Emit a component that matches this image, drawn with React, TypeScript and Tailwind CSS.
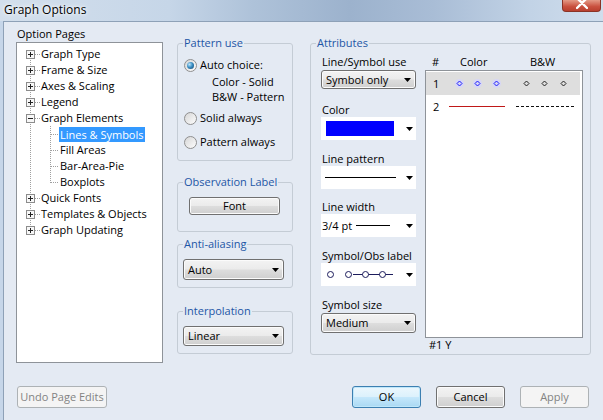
import React from "react";

const Arrow = () => (
  <svg width="7" height="4" viewBox="0 0 7 4" className="shrink-0">
    <path d="M0 0H7L3.5 4Z" fill="#000" />
  </svg>
);

function Radio({ checked }: { checked?: boolean }) {
  return (
    <span className="w-[13px] h-[13px] rounded-full border border-[#8f8f8f] bg-[linear-gradient(135deg,#d6d6d6,#fdfdfd)] flex items-center justify-center shrink-0">
      {checked && (
        <span className="w-[7px] h-[7px] rounded-full bg-[radial-gradient(circle_at_35%_35%,#bfe6fb_0%,#3b8fc4_45%,#0f3f66_100%)]" />
      )}
    </span>
  );
}

function Group({
  title,
  className,
  children,
}: {
  title: string;
  className: string;
  children: React.ReactNode;
}) {
  return (
    <fieldset className={"border border-[#c4ccd5] rounded-[3px] min-w-0 " + className}>
      <legend className="ml-[5px] px-[1px] text-[#1d56a6] leading-[14px]">{title}</legend>
      {children}
    </fieldset>
  );
}

function Select({ text, className }: { text: string; className: string }) {
  return (
    <div
      className={
        "rounded-[3px] border border-[#707070] bg-[linear-gradient(#f3f3f3_0%,#ebebeb_48%,#dddddd_52%,#cfcfcf_100%)] shadow-[inset_0_0_0_1px_#fbfbfb] flex items-center justify-between pl-[4px] pr-[4px] " +
        className
      }
    >
      <span>{text}</span>
      <Arrow />
    </div>
  );
}

function OwnerCombo({ children }: { children: React.ReactNode }) {
  return (
    <div className="h-[23px] w-[95px] bg-white flex items-center pr-[3px]">
      <div className="flex-1 flex items-center h-full">{children}</div>
      <Arrow />
    </div>
  );
}

function ParentGutter({ first, last, minus }: { first?: boolean; last?: boolean; minus?: boolean }) {
  return (
    <svg width="24" height="16" className="shrink-0">
      <line x1="13.5" y1={first ? 8 : 0} x2="13.5" y2={last ? 9 : 16} stroke="#a0a0a0" strokeDasharray="1 1" />
      <line x1="18" y1="8.5" x2="24" y2="8.5" stroke="#a0a0a0" strokeDasharray="1 1" />
      <rect x="9.5" y="4.5" width="8" height="8" fill="#f7f7f7" stroke="#8c8c8c" />
      <line x1="11" y1="8.5" x2="16" y2="8.5" stroke="#222" />
      {!minus && <line x1="13.5" y1="6" x2="13.5" y2="11" stroke="#222" />}
    </svg>
  );
}

function ChildGutter({ last }: { last?: boolean }) {
  return (
    <svg width="42" height="16" className="shrink-0">
      <line x1="13.5" y1="0" x2="13.5" y2="16" stroke="#a0a0a0" strokeDasharray="1 1" />
      <line x1="33.5" y1="0" x2="33.5" y2={last ? 9 : 16} stroke="#a0a0a0" strokeDasharray="1 1" />
      <line x1="34" y1="8.5" x2="42" y2="8.5" stroke="#a0a0a0" strokeDasharray="1 1" />
    </svg>
  );
}

function Diamond({ x, color, halo }: { x: number; color: string; halo?: boolean }) {
  const y = 11.5;
  return (
    <g>
      {halo && <circle cx={x} cy={y} r="4.5" fill="#d4d4ff" opacity="0.7" />}
      <path d={`M${x} ${y - 2.5}L${x + 2.5} ${y}L${x} ${y + 2.5}L${x - 2.5} ${y}Z`} fill="none" stroke={color} strokeWidth="1" />
    </g>
  );
}

function BtnNormal({ text, className }: { text: string; className: string }) {
  return (
    <div
      className={
        "rounded-[3px] border border-[#707070] bg-[linear-gradient(#f3f3f3_0%,#ebebeb_48%,#dddddd_52%,#cfcfcf_100%)] shadow-[inset_0_0_0_1px_#fbfbfb] flex items-center justify-center " +
        className
      }
    >
      {text}
    </div>
  );
}

function BtnDisabled({ text, className }: { text: string; className: string }) {
  return (
    <div
      className={
        "rounded-[3px] border border-[#adb2b5] bg-[#f4f4f4] text-[#838383] flex items-center justify-center " +
        className
      }
    >
      {text}
    </div>
  );
}

export default function App() {
  const parents1 = ["Graph Type", "Frame & Size", "Axes & Scaling", "Legend"];
  const children = ["Lines & Symbols", "Fill Areas", "Bar-Area-Pie", "Boxplots"];
  const parents2 = ["Quick Fonts", "Templates & Objects", "Graph Updating"];

  return (
    <div className="w-[603px] h-[420px] overflow-hidden relative bg-[#c8d8ea] font-['Open_Sans',sans-serif] text-[11px] leading-[14px] text-black">
      {/* title bar */}
      <div className="h-[21px] relative bg-[linear-gradient(90deg,#d3dfec_0%,#c6d6e8_28%,#aec2d9_42%,#9cb2cd_58%,#a9bdd6_72%,#c2d3e6_88%,#d0deed_100%)]">
        <div className="pl-[4px] pt-[2px] text-[12px] leading-[16px] [text-shadow:0_0_6px_#ffffff,0_0_3px_#ffffff]">
          Graph Options
        </div>
        <div className="absolute right-[2px] top-0 w-[39px] h-[12px] rounded-b-[4px] border border-t-0 border-[#8b3326] bg-[linear-gradient(#e49a86,#c9503e_60%,#b8402f)] flex justify-center">
          <svg width="12" height="10" viewBox="0 0 12 10">
            <path d="M1 -2L11 8M11 -2L1 8" stroke="#ffffff" strokeWidth="2.4" strokeLinecap="round" />
          </svg>
        </div>
      </div>

      <div className="flex h-[399px]">
        <div className="w-[3px] bg-[#c6d6e9]" />
        <div className="flex-1 border-l border-t border-[#8ea1b7] bg-[#e4eaf3] flex flex-col">
          <div className="flex pl-[12px] items-start">
            {/* left column */}
            <div className="w-[147px] pt-[5px] shrink-0">
              <div className="pl-[1px] h-[14px]">Option Pages</div>
              <div className="mt-[1px] h-[321px] bg-white border border-[#8e9399] pt-[3px]">
                {parents1.map((p, i) => (
                  <div key={p} className="flex items-center h-[16px]">
                    <ParentGutter first={i === 0} />
                    <span className="whitespace-nowrap">{p}</span>
                  </div>
                ))}
                <div className="flex items-center h-[16px]">
                  <ParentGutter minus />
                  <span className="whitespace-nowrap">Graph Elements</span>
                </div>
                {children.map((c, i) => (
                  <div key={c} className="flex items-center h-[16px]">
                    <ChildGutter last={i === children.length - 1} />
                    <span
                      className={
                        i === 0
                          ? "whitespace-nowrap px-[1px] h-[15px] leading-[15px] bg-[#3399ff] text-white"
                          : "whitespace-nowrap px-[1px]"
                      }
                    >
                      {c}
                    </span>
                  </div>
                ))}
                {parents2.map((p, i) => (
                  <div key={p} className="flex items-center h-[16px]">
                    <ParentGutter last={i === parents2.length - 1} />
                    <span className="whitespace-nowrap">{p}</span>
                  </div>
                ))}
              </div>
            </div>

            {/* middle column */}
            <div className="w-[116px] ml-[14px] mt-[14px] shrink-0 flex flex-col">
              <Group title="Pattern use" className="w-[116px]">
                <div className="pl-[6px] pt-[8px] pb-[11px]">
                  <div className="flex items-center gap-[3px] h-[14px]">
                    <Radio checked />
                    <span>Auto choice:</span>
                  </div>
                  <div className="mt-[3px] h-[14px] pl-[28px]">Color - Solid</div>
                  <div className="mt-[1px] h-[14px] pl-[28px]">{"B&W - Pattern"}</div>
                  <div className="mt-[7px] flex items-center gap-[3px] h-[14px]">
                    <Radio />
                    <span>Solid always</span>
                  </div>
                  <div className="mt-[10px] flex items-center gap-[3px] h-[14px]">
                    <Radio />
                    <span>Pattern always</span>
                  </div>
                </div>
              </Group>

              <Group title="Observation Label" className="w-[116px] mt-[14px]">
                <div className="pl-[11px] pt-[8px] pb-[16px]">
                  <BtnNormal text="Font" className="w-[91px] h-[18px]" />
                </div>
              </Group>

              <Group title="Anti-aliasing" className="w-[116px] mt-[5px]">
                <div className="pl-[5px] pt-[8px] pb-[7px]">
                  <Select text="Auto" className="w-[101px] h-[21px]" />
                </div>
              </Group>

              <Group title="Interpolation" className="w-[116px] mt-[16px]">
                <div className="pl-[5px] pt-[8px] pb-[7px]">
                  <Select text="Linear" className="w-[101px] h-[20px]" />
                </div>
              </Group>
            </div>

            {/* right column */}
            <div className="ml-[17px] mt-[14px] shrink-0">
              <Group title="Attributes" className="w-[281px]">
                <div className="flex pl-[10px] pt-[5px] pb-[2px]">
                  <div className="w-[95px] shrink-0 flex flex-col">
                    <div className="h-[14px] pl-[1px] whitespace-nowrap">Line/Symbol use</div>
                    <Select text="Symbol only" className="mt-[1px] w-[95px] h-[19px]" />

                    <div className="mt-[14px] h-[14px] pl-[1px]">Color</div>
                    <OwnerCombo>
                      <div className="ml-[5px] w-[68px] h-[15px] bg-[#0000ff]" />
                    </OwnerCombo>

                    <div className="mt-[12px] h-[14px] pl-[1px]">Line pattern</div>
                    <OwnerCombo>
                      <div className="ml-[4px] w-[71px] h-[1px] bg-black" />
                    </OwnerCombo>

                    <div className="mt-[11px] h-[14px] pl-[1px]">Line width</div>
                    <OwnerCombo>
                      <span className="pl-[1px] whitespace-nowrap">3/4 pt</span>
                      <div className="ml-[4px] w-[34px] h-[1px] bg-black" />
                    </OwnerCombo>

                    <div className="mt-[12px] h-[14px] pl-[1px] whitespace-nowrap">Symbol/Obs label</div>
                    <OwnerCombo>
                      <svg width="78" height="23" viewBox="0 0 78 23" className="ml-[4px]">
                        <g fill="none" stroke="#1c1c5c" strokeWidth="1">
                          <circle cx="5.5" cy="11.5" r="3" />
                          <circle cx="23.5" cy="11.5" r="3" />
                          <circle cx="40.5" cy="11.5" r="3" />
                          <circle cx="57.5" cy="11.5" r="3" />
                          <line x1="28" y1="11.5" x2="37.5" y2="11.5" />
                          <line x1="43.5" y1="11.5" x2="54.5" y2="11.5" />
                          <line x1="60.5" y1="11.5" x2="68" y2="11.5" />
                        </g>
                      </svg>
                    </OwnerCombo>

                    <div className="mt-[12px] h-[14px] pl-[1px]">Symbol size</div>
                    <Select text="Medium" className="mt-[1px] w-[95px] h-[20px]" />
                  </div>

                  <div className="ml-[9px] w-[158px] shrink-0 flex flex-col">
                    <div className="h-[14px] flex">
                      <span className="w-[35px] pl-[7px]">#</span>
                      <span className="w-[70px]">Color</span>
                      <span>{"B&W"}</span>
                    </div>
                    <div className="mt-[1px] h-[268px] bg-white border border-[#8e9399] pt-[1px]">
                      <div className="h-[23px] mr-[2px] bg-[#dedede] flex items-center pl-[7px]">
                        <span className="w-[12px]">1</span>
                        <svg width="130" height="23" viewBox="0 0 130 23">
                          <Diamond x={14.5} color="#1a1aff" halo />
                          <Diamond x={32.5} color="#1a1aff" halo />
                          <Diamond x={51.5} color="#1a1aff" halo />
                          <Diamond x={81.5} color="#222" />
                          <Diamond x={99.5} color="#222" />
                          <Diamond x={118.5} color="#222" />
                        </svg>
                      </div>
                      <div className="h-[23px] flex items-center pl-[7px]">
                        <span className="w-[12px]">2</span>
                        <svg width="130" height="23" viewBox="0 0 130 23">
                          <line x1="4" y1="11.5" x2="60" y2="11.5" stroke="#c01818" strokeWidth="1" />
                          <line x1="71" y1="11.5" x2="129" y2="11.5" stroke="#111" strokeWidth="1" strokeDasharray="3 2" />
                        </svg>
                      </div>
                    </div>
                    <div className="h-[14px] pl-[4px]">#1 Y</div>
                  </div>
                </div>
              </Group>
            </div>
          </div>

          {/* bottom buttons */}
          <div className="mt-[23px] flex pl-[13px] pr-[14px] items-center">
            <BtnDisabled text="Undo Page Edits" className="w-[90px] h-[22px]" />
            <div className="flex-1" />
            <div className="w-[69px] h-[22px] rounded-[3px] border border-[#3c7fb1] bg-[linear-gradient(#ecf7fd_0%,#dcf1fc_48%,#c4e7fb_52%,#aad9f3_100%)] shadow-[inset_0_0_0_1px_#bfe7fa] flex items-center justify-center">
              OK
            </div>
            <BtnNormal text="Cancel" className="ml-[15px] w-[69px] h-[22px]" />
            <BtnDisabled text="Apply" className="ml-[15px] w-[69px] h-[22px]" />
          </div>
        </div>
      </div>
    </div>
  );
}
